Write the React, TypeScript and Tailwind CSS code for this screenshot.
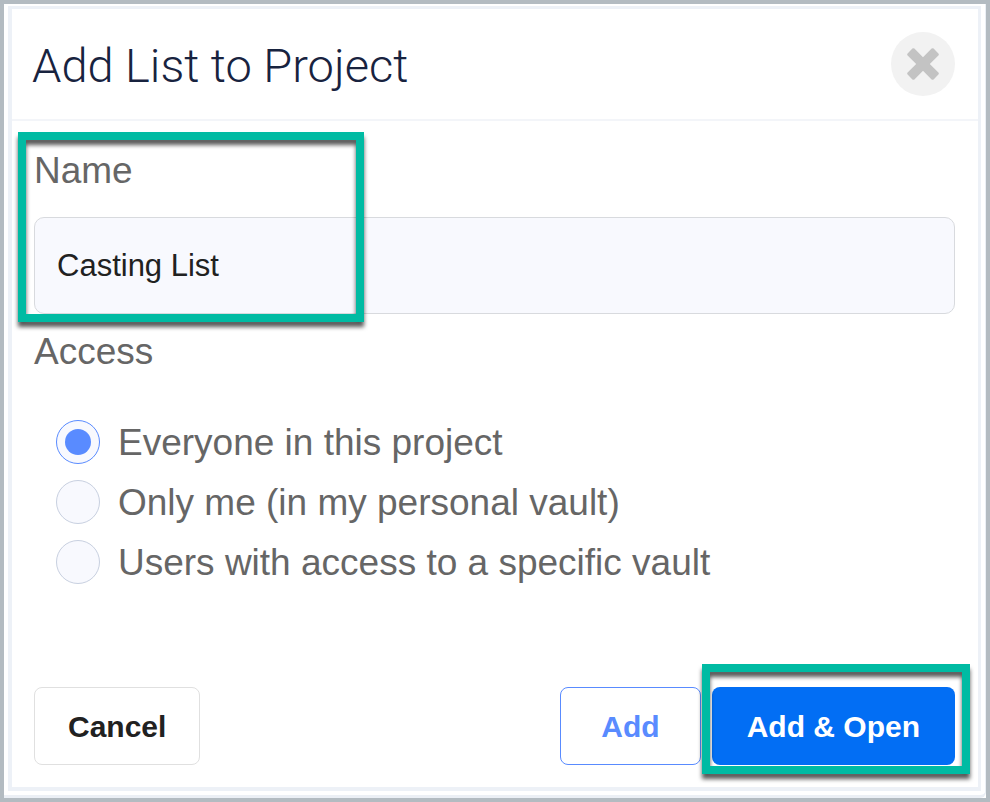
import React, { useState } from 'react';

const ACCESS_OPTIONS = [
  { id: 'everyone', label: 'Everyone in this project' },
  { id: 'personal', label: 'Only me (in my personal vault)' },
  { id: 'vault', label: 'Users with access to a specific vault' },
];

// Green frame drawn over a part of the dialog to point it out
const Highlight: React.FC<{ className: string }> = ({ className }) => (
  <div
    aria-hidden="true"
    className={`absolute pointer-events-none border-8 border-[#00bba3] drop-shadow-[0_5px_2px_rgba(0,0,0,0.65)] ${className}`}
  />
);

const App: React.FC = () => {
  const [name, setName] = useState('Casting List');
  const [access, setAccess] = useState('everyone');

  return (
    <div className="min-h-screen flex bg-white border-4 border-[#b3bbc1] font-['Liberation_Sans',Arial,sans-serif]">
      <div className="flex-1 flex border-b-3 border-r border-[#ebeff5] rounded-br-md pt-0.5 px-1 pb-1">
        <form
          className="flex-1 flex flex-col border-4 border-t-3 border-r-3 border-[#edf1f7]"
          onSubmit={(e) => e.preventDefault()}
        >
          {/* Header */}
          <header className="h-28 flex items-center justify-between pl-5 pr-[23px] pt-1 border-b-2 border-[#f3f5f9]">
            <h1 className="font-['Roboto',sans-serif] font-light text-[47px] leading-14 text-[#18233f]">
              Add List to Project
            </h1>
            <button
              type="button"
              aria-label="Close"
              className="w-16 h-16 mb-1 rounded-full bg-[#f2f2f2] flex items-center justify-center"
            >
              <svg width="32" height="32" viewBox="0 0 32 32" fill="#c3c3c3">
                <path d="M7.4.6 16 9.2 24.6.6Q25.6-.3 26.6.6L31.4 5.4Q32.3 6.4 31.4 7.4L22.8 16 31.4 24.6Q32.3 25.6 31.4 26.6L26.6 31.4Q25.6 32.3 24.6 31.4L16 22.8 7.4 31.4Q6.4 32.3 5.4 31.4L.6 26.6Q-.3 25.6.6 24.6L9.2 16 .6 7.4Q-.3 6.4.6 5.4L5.4.6Q6.4-.3 7.4.6Z" />
              </svg>
            </button>
          </header>

          {/* Fields */}
          <div className="flex-1 pl-[22px] pr-[23px] pt-7 text-[#666666]">
            <div className="relative">
              <label htmlFor="list-name" className="block text-[37px] leading-11">
                Name
              </label>
              <input
                id="list-name"
                type="text"
                value={name}
                onChange={(e) => setName(e.target.value)}
                className="block w-full h-[97px] mt-6 px-[22px] rounded-[10px] border border-[#d8dade] bg-[#f8f9fe] text-[31px] text-[#212121]"
              />
              <Highlight className="-top-[17px] -left-4 -bottom-2 w-[346px]" />
            </div>

            <fieldset className="mt-4">
              <legend className="text-[37px] leading-11">Access</legend>
              <div className="mt-[46px] px-[22px] flex flex-col gap-4">
                {ACCESS_OPTIONS.map((option) => (
                  <label key={option.id} className="h-11 flex items-center gap-[18px] text-[37px] leading-11">
                    <input
                      type="radio"
                      name="access"
                      checked={access === option.id}
                      onChange={() => setAccess(option.id)}
                      className="appearance-none shrink-0 w-11 h-11 rounded-full border border-[#c8d0e0] bg-[#f8f9fe] grid place-content-center checked:border-[#598bff] before:w-[26px] before:h-[26px] before:rounded-full checked:before:bg-[#598bff]"
                    />
                    <span className="pt-0.5">{option.label}</span>
                  </label>
                ))}
              </div>
            </fieldset>
          </div>

          {/* Footer */}
          <footer className="flex items-center gap-[11px] pl-[22px] pr-[23px] pb-[22px] text-[30px] font-bold">
            <button type="button" className="h-[78px] px-[33px] rounded-lg border border-[#e0e0e0] text-[#212121]">
              Cancel
            </button>
            <button type="button" className="h-[78px] px-10 ml-auto rounded-lg border border-[#598bff] text-[#598bff]">
              Add
            </button>
            <div className="relative">
              <button type="submit" className="block h-[78px] px-[35px] rounded-lg bg-[#026ef4] text-white">
                Add &amp; Open
              </button>
              <Highlight className="-top-[23px] -left-[10px] -right-[15px] -bottom-[9px]" />
            </div>
          </footer>
        </form>
      </div>
    </div>
  );
};

export default App;
